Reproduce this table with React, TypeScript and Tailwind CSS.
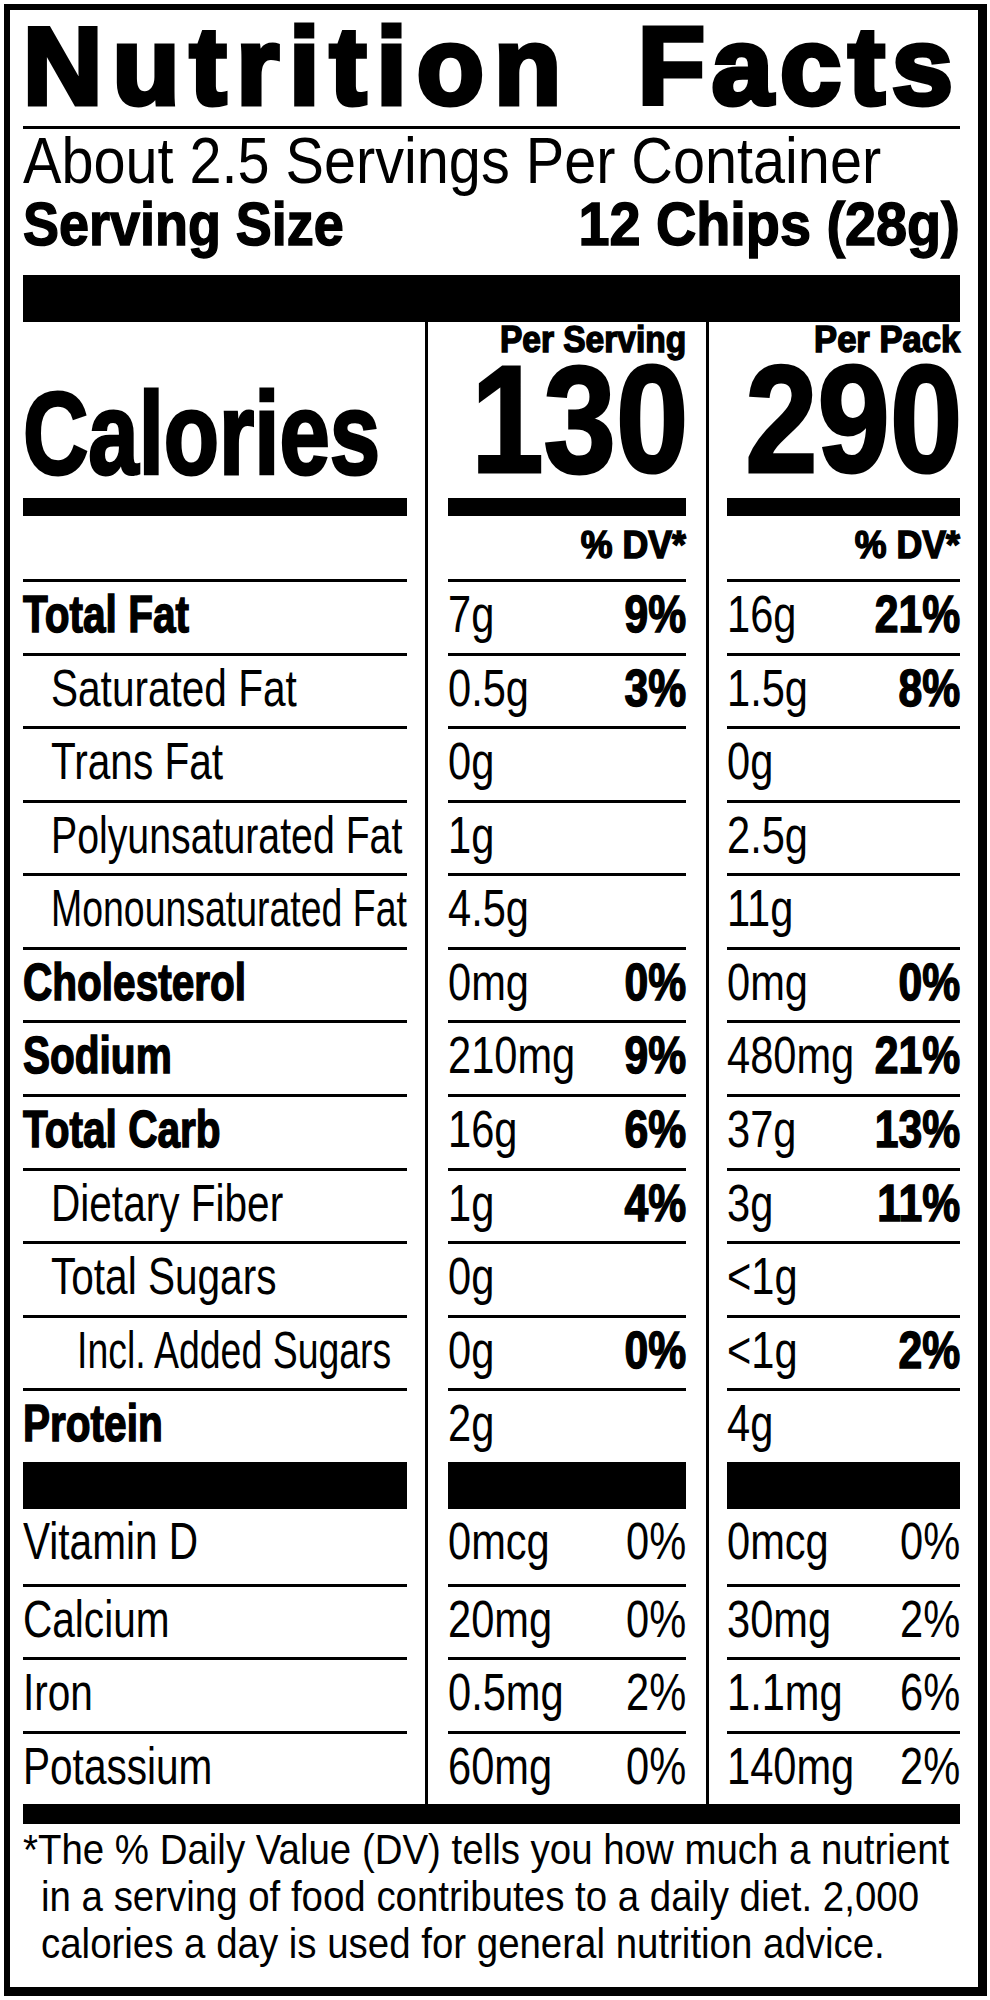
import type { ReactNode } from 'react'

const sans = "font-['Liberation_Sans',Arial,sans-serif]"

type Row = {
  label: string
  bold?: boolean
  indent?: 0 | 1 | 2
  squeeze?: string
  a: string
  ap?: string
  b: string
  bp?: string
}

const rows: Row[] = [
  { label: 'Total Fat', bold: true, a: '7g', ap: '9%', b: '16g', bp: '21%' },
  { label: 'Saturated Fat', indent: 1, a: '0.5g', ap: '3%', b: '1.5g', bp: '8%' },
  { label: 'Trans Fat', indent: 1, a: '0g', b: '0g' },
  { label: 'Polyunsaturated Fat', indent: 1, squeeze: 'scale-x-[0.755]', a: '1g', b: '2.5g' },
  { label: 'Monounsaturated Fat', indent: 1, squeeze: 'scale-x-[0.72]', a: '4.5g', b: '11g' },
  { label: 'Cholesterol', bold: true, a: '0mg', ap: '0%', b: '0mg', bp: '0%' },
  { label: 'Sodium', bold: true, a: '210mg', ap: '9%', b: '480mg', bp: '21%' },
  { label: 'Total Carb', bold: true, a: '16g', ap: '6%', b: '37g', bp: '13%' },
  { label: 'Dietary Fiber', indent: 1, a: '1g', ap: '4%', b: '3g', bp: '11%' },
  { label: 'Total Sugars', indent: 1, a: '0g', b: '<1g' },
  { label: 'Incl. Added Sugars', indent: 2, squeeze: 'scale-x-[0.72]', a: '0g', ap: '0%', b: '<1g', bp: '2%' },
  { label: 'Protein', bold: true, a: '2g', b: '4g' },
]

const vitamins = [
  ['Vitamin D', '0mcg', '0%', '0mcg', '0%'],
  ['Calcium', '20mg', '0%', '30mg', '2%'],
  ['Iron', '0.5mg', '2%', '1.1mg', '6%'],
  ['Potassium', '60mg', '0%', '140mg', '2%'],
]

const bold = 'font-bold [-webkit-text-stroke:1.5px_black]'
const indents = ['pl-0', 'pl-[28px]', 'pl-[54px]']

// condensed look: no narrow face installed, so squeeze the glyphs sideways
function S({ children, s = 'scale-x-[0.8]', right, className = '' }: { children: ReactNode; s?: string; right?: boolean; className?: string }) {
  return (
    <span className={`inline-block whitespace-nowrap ${right ? 'origin-right' : 'origin-left'} ${s} ${className}`}>
      {children}
    </span>
  )
}

function Divider({ second }: { second?: boolean }) {
  return (
    <div className={second ? 'w-[41px] shrink-0 pl-[20px] self-stretch' : 'w-[41px] shrink-0 pl-[18px] self-stretch'}>
      <div className="w-[3px] h-full bg-black" />
    </div>
  )
}

function Amounts({ amount, pct, pctBold, cell }: { amount: string; pct?: string; pctBold?: boolean; cell: string }) {
  return (
    <div className={`${cell} flex`}>
      <div className="flex-1 min-w-0">
        <S>{amount}</S>
      </div>
      {pct && (
        <S right s={pctBold ? 'scale-x-[0.82]' : 'scale-x-[0.8]'} className={pctBold ? bold : ''}>
          {pct}
        </S>
      )}
    </div>
  )
}

function TableRow({ row }: { row: Row }) {
  const cell = 'h-full shrink-0 border-t-[3px] border-black pt-[6px]'
  return (
    <div className="flex h-[73.58px] text-[52px] leading-[52px]">
      <div className={`w-[384px] ${cell} ${indents[row.indent ?? 0]}`}>
        <S s={row.squeeze ?? 'scale-x-[0.78]'} className={row.bold ? bold : ''}>{row.label}</S>
      </div>
      <Divider />
      <Amounts amount={row.a} pct={row.ap} pctBold cell={`w-[238px] ${cell}`} />
      <Divider second />
      <Amounts amount={row.b} pct={row.bp} pctBold cell={`w-[233px] ${cell}`} />
    </div>
  )
}

function VitaminRow({ v, first }: { v: string[]; first?: boolean }) {
  const cell = first ? 'h-full shrink-0 pt-[6px]' : 'h-full shrink-0 border-t-[3px] border-black pt-[6px]'
  return (
    <div className={`flex text-[52px] leading-[52px] ${first ? 'h-[75px]' : 'h-[73.5px]'}`}>
      <div className={`w-[384px] ${cell}`}>
        <S s="scale-x-[0.78]">{v[0]}</S>
      </div>
      <Divider />
      <Amounts amount={v[1]} pct={v[2]} cell={`w-[238px] ${cell}`} />
      <Divider second />
      <Amounts amount={v[3]} pct={v[4]} cell={`w-[233px] ${cell}`} />
    </div>
  )
}

function CalorieColumn({ label, value, width, labelSqueeze }: { label: string; value: string; width: string; labelSqueeze: string }) {
  return (
    <div className={`${width} shrink-0 flex flex-col`}>
      <div className="h-[176px] flex flex-col items-end">
        <S right s={labelSqueeze} className={`text-[36px] leading-[36px] ${bold}`}>{label}</S>
        <S right s="scale-x-[0.85]" className="text-[153px] leading-[122px] font-bold [-webkit-text-stroke:3px_black] -mr-[2px]">
          {value}
        </S>
      </div>
      <div className="h-[18px] bg-black" />
      <div className="pt-[10px] flex justify-end">
        <S right s="scale-x-[0.94]" className={`text-[38px] leading-[38px] ${bold}`}>% DV*</S>
      </div>
    </div>
  )
}

export default function App() {
  return (
    <div className="bg-white w-[990px] h-[2000px] pt-[4px] pl-[4px]">
      <div
        className={`w-[983px] h-[1992px] border-l-[6px] border-t-[6px] border-r-[9px] border-b-[9px] border-black pl-[13px] pr-[18px] text-black ${sans}`}
      >
        {/* Header */}
        <div className="mt-[1px] h-[110px] flex justify-between font-bold text-[110px] leading-[110px] [-webkit-text-stroke:5px_black]">
          <span className="tracking-[10px]">Nutrition</span>
          <span className="tracking-[7px]">Facts</span>
        </div>
        <div className="mt-[5px] h-[3px] bg-black" />
        <div className="h-[64px] text-[64px] leading-[64px]">
          <S s="scale-x-[0.9]">About 2.5 Servings Per Container</S>
        </div>
        <div className="h-[62px] flex justify-between text-[62px] leading-[62px]">
          <S s="scale-x-[0.87]" className={bold}>Serving Size</S>
          <S right s="scale-x-[0.9]" className={bold}>12 Chips (28g)</S>
        </div>
        <div className="mt-[20px] h-[47px] bg-black" />

        {/* Calories */}
        <div className="flex h-[257px]">
          <div className="w-[384px] shrink-0 flex flex-col">
            <div className="h-[176px] pt-[54px]">
              <S s="scale-x-[0.78]" className="text-[116px] leading-[116px] font-bold [-webkit-text-stroke:3px_black]">
                Calories
              </S>
            </div>
            <div className="h-[18px] bg-black" />
          </div>
          <Divider />
          <CalorieColumn label="Per Serving" value="130" width="w-[238px]" labelSqueeze="scale-x-[0.93]" />
          <Divider second />
          <CalorieColumn label="Per Pack" value="290" width="w-[233px]" labelSqueeze="scale-x-[0.96]" />
        </div>

        {/* Nutrients */}
        {rows.map((r) => (
          <TableRow key={r.label} row={r} />
        ))}

        <div className="flex h-[47px]">
          <div className="w-[384px] shrink-0 bg-black" />
          <Divider />
          <div className="w-[238px] shrink-0 bg-black" />
          <Divider second />
          <div className="w-[233px] shrink-0 bg-black" />
        </div>

        {vitamins.map((v, i) => (
          <VitaminRow key={v[0]} v={v} first={i === 0} />
        ))}

        <div className="h-[20px] bg-black" />

        {/* Footnote */}
        <div className="pt-[2px] text-[42px] leading-[47px]">
          <div>
            <S s="scale-x-[0.915]">*The % Daily Value (DV) tells you how much a nutrient</S>
          </div>
          <div className="pl-[18px]">
            <S s="scale-x-[0.915]">in a serving of food contributes to a daily diet. 2,000</S>
          </div>
          <div className="pl-[18px]">
            <S s="scale-x-[0.915]">calories a day is used for general nutrition advice.</S>
          </div>
        </div>
      </div>
    </div>
  )
}
